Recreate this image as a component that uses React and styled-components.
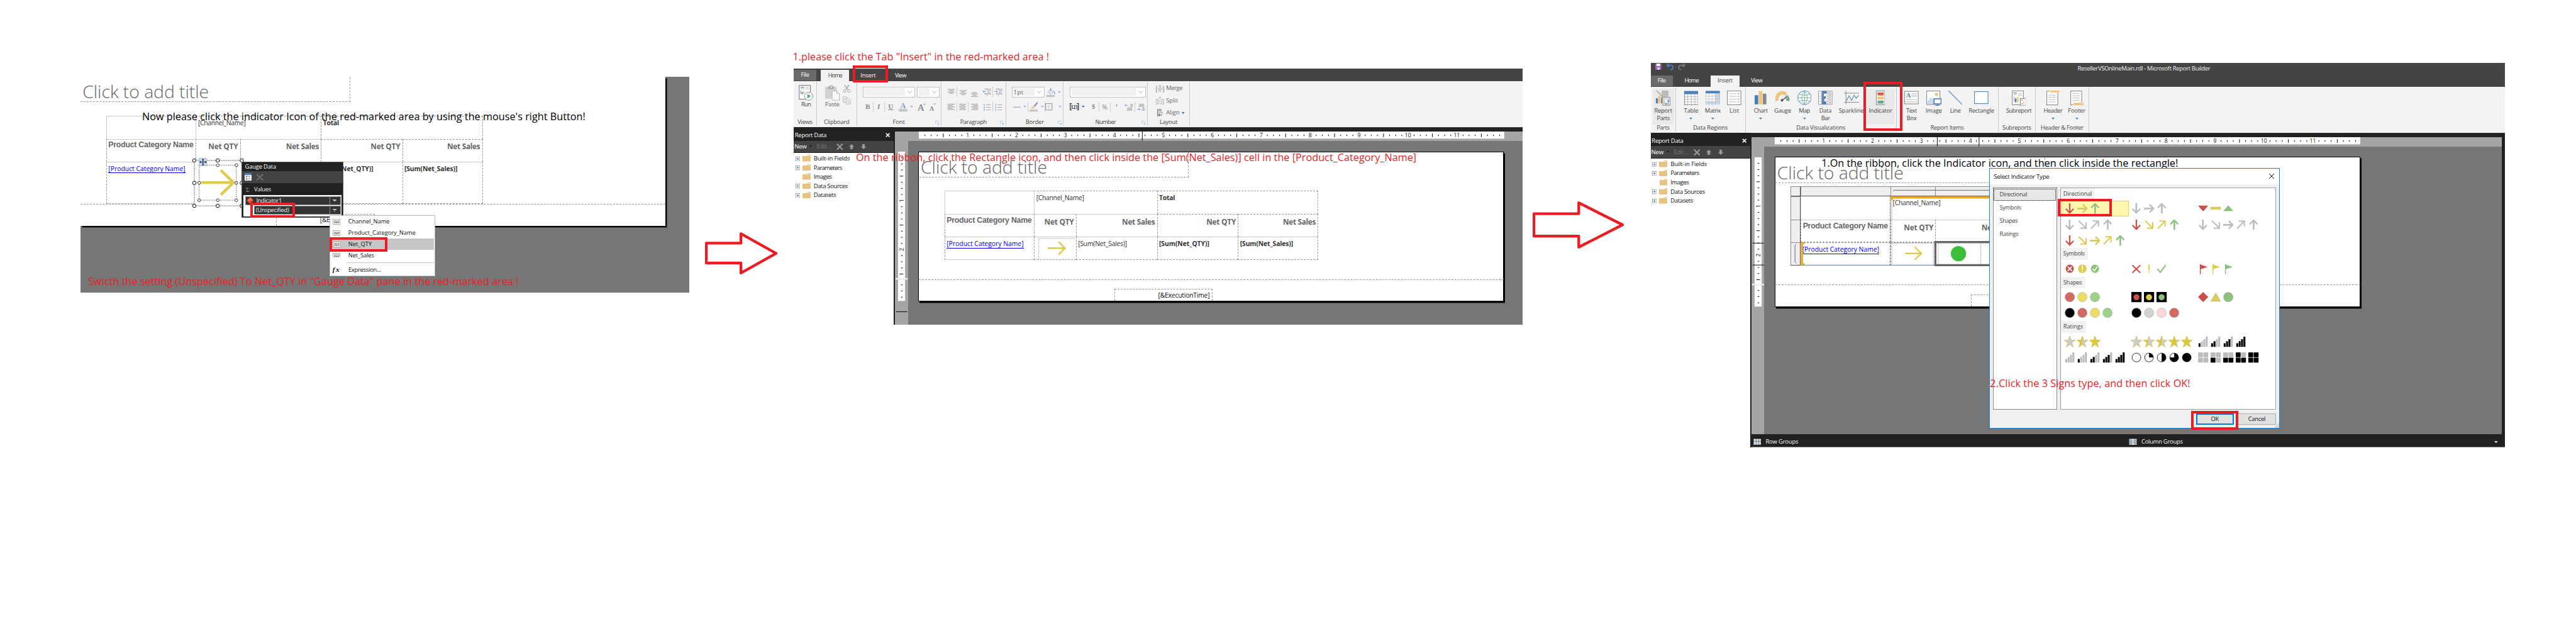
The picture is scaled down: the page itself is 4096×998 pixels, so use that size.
import React, { useLayoutEffect, useRef } from "react";
import styled, { createGlobalStyle, css } from "styled-components";

const STAGE_W = 5056;
const RED = "#ed1c24";
const UI = '"Open Sans", "Noto Sans", sans-serif';
const C = { r: "#cb5148", y: "#dccd50", g: "#8dc07a", n: "#bdbdbd", k: "#000" };

const Global = createGlobalStyle`
  html, body { margin: 0; padding: 0; background: #fff; overflow: hidden; }
  * { box-sizing: border-box; }
`;

/* ---------- text ---------- */

const Txt = styled.span`
  display: inline-block;
  flex: none;
  white-space: pre;
  line-height: 1.362;
  font-family: ${(p) => (p.$face ? `"${p.$face}", sans-serif` : UI)};
  font-size: ${(p) => p.$size}px;
  font-weight: ${(p) => p.$weight};
  color: ${(p) => p.$color};
`;

/* Text tracked so that it spans exactly `w` stage units. */
function T({ children, w, size = 11.5, weight = 400, color = "#444", face }) {
  const ref = useRef(null);
  useLayoutEffect(() => {
    const el = ref.current;
    if (!w || !el) return;
    el.style.letterSpacing = "0px";
    const unit = document.getElementById("stage").getBoundingClientRect().width / STAGE_W;
    const natural = el.getBoundingClientRect().width / unit;
    el.style.letterSpacing = `${(w - natural) / el.textContent.length}px`;
  }, [children, w, size]);
  return (
    <Txt ref={ref} $size={size} $weight={weight} $color={color} $face={face}>
      {children}
    </Txt>
  );
}

/* ---------- stage and annotations ---------- */

const Stage = styled.main`
  position: relative;
  display: flex;
  align-items: flex-start;
  width: ${STAGE_W}px;
  height: 1232px;
  zoom: 0.810127;
  background: #fff;
  overflow: hidden;
`;

const NoteBox = styled.div`
  position: absolute;
  left: ${(p) => p.$x}px;
  top: ${(p) => p.$b - 1.069 * p.$size}px;
  display: flex;
`;
const Note = ({ x, b, size = 20, ...rest }) => (
  <NoteBox $x={x} $b={b} $size={size}>
    <T size={size} {...rest} />
  </NoteBox>
);

const Marker = styled.div`
  position: absolute;
  left: ${(p) => p.$x}px;
  top: ${(p) => p.$y}px;
  width: ${(p) => p.$w}px;
  height: ${(p) => p.$h}px;
  border: 5px solid ${RED};
`;

const StepArrow = styled.svg`
  flex: none;
  margin: ${(p) => p.$mt}px 0 0 ${(p) => p.$ml}px;
  fill: none;
  stroke: ${RED};
  stroke-width: 5.4;
  stroke-linejoin: round;
`;

/* ---------- report page ---------- */

const Page = styled.div`
  position: relative;
  flex: none;
  width: ${(p) => p.$w}px;
  height: ${(p) => p.$h}px;
  background: #fff;
`;

const DashBox = styled.div`
  position: absolute;
  left: ${(p) => p.$x}px;
  top: ${(p) => p.$y}px;
  width: ${(p) => p.$w}px;
  height: ${(p) => p.$h}px;
  border: 0 dashed #9a9a9a;
  border-width: ${(p) => p.$sides};
`;

const Grid = styled.div`
  position: absolute;
  left: ${(p) => p.$x}px;
  top: ${(p) => p.$y}px;
  display: grid;
  grid-template-columns: ${(p) => p.$cols};
  grid-template-rows: ${(p) => p.$rows};
`;

const edge = (k) => (k === "s" ? "1px solid #c9c9c9" : k === "d" ? "1px dashed #999" : "none");
const Cell = styled.div`
  display: flex;
  justify-content: ${(p) => (p.$right ? "flex-end" : "flex-start")};
  align-items: flex-start;
  padding: ${(p) => p.$pt ?? 3.5}px 4px 0 3px;
  grid-column: span ${(p) => p.$span || 1};
  border-top: ${(p) => edge(p.$e[0])};
  border-right: ${(p) => edge(p.$e[1])};
  border-bottom: ${(p) => edge(p.$e[2])};
  border-left: ${(p) => edge(p.$e[3])};
`;
const Link = styled.span`
  display: flex;
  height: 18px;
  border-bottom: 1.4px solid #00f;
`;

const Head = ({ children, w }) => (
  <T size={14.6} weight={700} color="#666" w={w}>{children}</T>
);
const Field = ({ children, w, bold }) => (
  <T size={12.8} weight={bold ? 700 : 400} color="#333" w={w}>{children}</T>
);
const CategoryHead = () => (
  <T size={15.2} weight={700} color="#666" face="Liberation Sans" w={167}>Product Category Name</T>
);
const CategoryLink = () => (
  <Link><T size={12.8} color="#00f" w={151}>[Product Category Name]</T></Link>
);

const CellArrow = styled.svg`
  flex: none;
  fill: none;
  stroke: #dccd50;
`;

function ReportTable({ x, y, cols, lastRow, big }) {
  return (
    <Grid $x={x} $y={y} $cols={cols} $rows={`45px 45px ${lastRow}px`}>
      <Cell $e={["s", "", "", "s"]} />
      <Cell $e={["d", "", "", "s"]} $span={2}><Field w={93.5}>[Channel_Name]</Field></Cell>
      <Cell $e={["d", "d", "", "d"]} $span={2}><Field bold w={31}>Total</Field></Cell>
      <Cell $e={["s", "", "", "d"]} $pt={1}><CategoryHead /></Cell>
      <Cell $e={["s", "", "", "d"]} $right><Head w={58}>Net QTY</Head></Cell>
      <Cell $e={["s", "", "", "d"]} $right><Head w={64.5}>Net Sales</Head></Cell>
      <Cell $e={["d", "", "", "d"]} $right><Head w={58}>Net QTY</Head></Cell>
      <Cell $e={["d", "d", "", "d"]} $right><Head w={64.5}>Net Sales</Head></Cell>
      <Cell $e={["s", "", "s", "d"]}><CategoryLink /></Cell>
      <Cell $e={["s", "", "d", "d"]} $pt={0}>
        {!big && (
          <CellArrow width="76" height="43">
            <path d="M4.500 43V2.500H76" stroke="#999" strokeDasharray="2.500 1.500" />
            <path d="M22.500 21.500H55M43.500 9L56 21.500L43.500 34" strokeWidth="3.200" />
          </CellArrow>
        )}
      </Cell>
      <Cell $e={["s", "", "d", "d"]}><Field w={96}>[Sum(Net_Sales)]</Field></Cell>
      <Cell $e={["s", "", "d", "d"]}><Field bold w={98.5}>[Sum(Net_QTY)]</Field></Cell>
      <Cell $e={["s", "d", "d", "d"]}><Field bold w={104}>[Sum(Net_Sales)]</Field></Cell>
    </Grid>
  );
}

/* ---------- shot 1: gauge data ---------- */

const Shot = styled.section`
  flex: none;
  width: 1195px;
  height: 423px;
  margin: 151px 0 0 158px;
  background: #767676;
`;
const EdgePage = styled(Page)`
  box-shadow: 3px 3px 0 #000;
`;

const Overlay = styled.svg`
  position: absolute;
  left: ${(p) => p.$x}px;
  top: ${(p) => p.$y}px;
  overflow: visible;
`;

function Selection() {
  const xs = [0, 46, 93];
  const ys = [0, 44, 89];
  const ix = [9.5, 46, 82.5];
  const iy = [9.5, 44, 78];
  const out = [], inn = [];
  xs.forEach((x, i) => ys.forEach((y, j) => {
    if (i === 1 && j === 1) return;
    out.push(<rect key={`o${i}${j}`} x={x - 3} y={y - 3} width="6" height="6" rx="1.500" fill="#fff" stroke="#000" strokeWidth="1.200" />);
    if (i || j) inn.push(<ellipse key={`i${i}${j}`} cx={ix[i]} cy={iy[j]} rx="2.800" ry="2.800" fill="#fff" stroke="#333" strokeWidth="1.200" />);
  }));
  return (
    <Overlay $x={223.6} $y={163.3} width="100" height="96" fill="none">
      <rect x="0" y="0" width="93" height="89" fill="#fff" stroke="#000" strokeDasharray="1.200 1.200" />
      <rect x="9.500" y="9.500" width="73" height="68.500" stroke="#888" strokeWidth="1.600" strokeDasharray="2 1.800" />
      <path d="M13 43.300H76M51.800 19L77 43.300L51.800 67.500" stroke="#dccd50" strokeWidth="5.400" />
      {out}
      {inn}
      <rect x="9.500" y="-4" width="15" height="14.500" rx="1" fill="#d3e0f0" stroke="#8ba0bd" />
      <path d="M17-2.500V9M11 3.200H23M15-.5L17-2.500L19-.5M15 7L17 9L19 7M13 1.200L11 3.200L13 5.200M21 1.200L23 3.200L21 5.200" stroke="#1d2b45" strokeWidth="1.300" />
    </Overlay>
  );
}

const GaugePanel = styled.aside`
  position: absolute;
  left: 474.6px;
  top: 317.3px;
  width: 199.2px;
  height: 110.4px;
  background: #212121;
  border: 1px solid #555;
  display: flex;
  flex-direction: column;
`;
const GaugeTitle = styled.div`
  height: 17px;
  padding-left: 5px;
  display: flex;
  align-items: center;
`;
const GaugeTools = styled.div`
  height: 23.5px;
  background: #444;
  display: flex;
  align-items: center;
  gap: 9px;
  padding-left: 4px;
`;
const GaugeValues = styled.div`
  height: 23.5px;
  display: flex;
  align-items: center;
  padding: 2px 0 0 6px;
  gap: 8px;
`;
const GaugeList = styled.div`
  width: 193.5px;
  height: 42.7px;
  margin-left: 1.5px;
  padding: 2.8px 2px 0;
  background: #fff;
  display: flex;
  flex-direction: column;
  align-items: flex-end;
  gap: 1.5px;
`;
const GaugeItem = styled.div`
  width: ${(p) => p.$w}px;
  height: 17.3px;
  background: #333;
  border: 1px solid #8a8a8a;
  display: flex;
  align-items: center;
  padding-left: 2px;
  gap: 5px;
  &::after {
    content: "";
    margin-left: auto;
    width: 20px;
    height: 100%;
    border-left: 1px solid #8a8a8a;
    background: linear-gradient(#bbb, #bbb) 5px 5px / 8px 1.3px no-repeat,
      linear-gradient(#bbb, #bbb) 6px 6.3px / 6px 1.3px no-repeat,
      linear-gradient(#bbb, #bbb) 7.5px 7.6px / 3px 1.3px no-repeat;
  }
`;

const Menu = styled.nav`
  position: absolute;
  left: 647px;
  top: 422px;
  width: 207px;
  height: 120px;
  padding: 1px 1px 0 1px;
  background: #fff;
  border: 1px solid #bdbdbd;
`;
const MenuItem = styled.div`
  height: 22px;
  padding-left: 3.5px;
  display: flex;
  align-items: center;
  gap: 16px;
  background: ${(p) => (p.$on ? "#c6c6c6" : "#fff")};
`;
const MenuRule = styled.hr`
  margin: 3px 0 2px 31px;
  border: 0;
  border-top: 1px solid #c4c4c4;
`;
const FieldIcon = () => (
  <svg width="15" height="11" fill="none">
    <rect x=".5" y=".5" width="14" height="10" fill="#fffdf2" stroke="#ad9f78" />
    <path d="M3 4H6M7 4H9M10 4H12.500M3 7H5M6 7H8.500M9.500 7H12" stroke="#22229a" strokeWidth="1.400" />
  </svg>
);

function GaugeShot() {
  return (
    <Shot>
      <EdgePage $w={1148.5} $h={292}>
        <NoteBox $x={4} $b={42.5} $size={35}><T size={35} weight={300} color="#666" w={248}>Click to add title</T></NoteBox>
        <DashBox $x={0} $y={1} $w={530} $h={48.5} $sides="0 1px 1px 0" />
        <ReportTable x={50.5} y={76.3} cols="176px 86.5px 159px 159.5px 158px" lastRow={83} big />
        <DashBox $x={0} $y={249} $w={1148} $h={1} $sides="1px 0 0 0" />
        <DashBox $x={384} $y={268.5} $w={193.5} $h={23.5} $sides="1px 1px 0 1px" />
        <NoteBox $x={470} $b={285} $size={12.8}><T size={12.8} color="#222" w={101}>[&amp;ExecutionTime]</T></NoteBox>
        <Selection />
      </EdgePage>
    </Shot>
  );
}

function GaugeFloats() {
  const menu = [["Channel_Name", 81], ["Product_Category_Name", 132], ["Net_QTY", 46], ["Net_Sales", 50.5]];
  return (
    <>
      <GaugePanel>
        <GaugeTitle><T color="#fff" w={61}>Gauge Data</T></GaugeTitle>
        <GaugeTools>
          <svg width="14" height="15" fill="none"><path d="M0 0H14V15H0Z" fill="#f4f4f4" /><path d="M0 2H14" stroke="#4a7fc1" strokeWidth="4" /><path d="M7 7H11M7 11.500H11" stroke="#666" /><path d="M3 7H5M3 11.500H5" stroke="#333" strokeWidth="2" /></svg>
          <svg width="15" height="14" fill="none"><path d="M1 1L14 13M14 1L1 13" stroke="#707070" strokeWidth="2.400" /></svg>
        </GaugeTools>
        <GaugeValues>
          <T size={12} weight={700} color="#777" face="Liberation Serif" w={9}>Σ</T>
          <T color="#eee" w={33}>Values</T>
        </GaugeValues>
        <GaugeList>
          <GaugeItem $w={188}>
            <svg width="14" height="14"><path d="M7 0L14 7L7 14L0 7Z" fill="#d8492a" /><path d="M7 1L12 6L5 9L2 7Z" fill="#ee7a55" /></svg>
            <T color="#eee" w={50}>Indicator1</T>
          </GaugeItem>
          <GaugeItem $w={170}><T color="#eee" w={65}>(Unspecified)</T></GaugeItem>
        </GaugeList>
      </GaugePanel>
      <Marker $x={491.8} $y={397} $w={87.2} $h={30.7} />
      <Menu>
        {menu.map(([label, w], i) => (
          <MenuItem key={label} $on={i === 2}><FieldIcon /><T color="#111" w={w}>{label}</T></MenuItem>
        ))}
        <MenuRule />
        <MenuItem>
          <T size={14} weight={700} color="#111" face="Liberation Serif" w={15}><i>fx</i></T>
          <T color="#111" w={64}>Expression...</T>
        </MenuItem>
      </Menu>
      <Marker $x={646.3} $y={465} $w={114.5} $h={28.7} />
    </>
  );
}

/* ---------- report builder window ---------- */

const Win = styled.section`
  flex: none;
  display: flex;
  flex-direction: column;
  width: ${(p) => p.$w}px;
  height: ${(p) => p.$h}px;
  margin: ${(p) => p.$mt}px 0 0 ${(p) => p.$ml}px;
  background: #fff;
`;
const TitleBar = styled.header`
  height: 21px;
  background: #444;
  display: flex;
  align-items: flex-start;
  padding: 1px 0 0 9px;
`;
const WinTitle = styled.div`
  margin-left: 769px;
  margin-top: -2px;
`;
const TabBar = styled.div`
  height: 25px;
  background: #444;
  padding-top: 3px;
  display: flex;
`;
const Tab = styled.div`
  width: ${(p) => p.$w}px;
  height: ${(p) => (p.$file ? 21 : 22)}px;
  display: flex;
  align-items: center;
  justify-content: center;
  background: ${(p) => (p.$file ? "#6a6a6a" : p.$on ? "#f3f3f3" : "transparent")};
  margin-right: ${(p) => p.$mr || 0}px;
`;
const Ribbon = styled.div`
  height: 90px;
  flex: none;
  background: #f3f3f3;
  display: flex;
`;
const Band = styled.div`
  height: 9px;
  flex: none;
  background: #212121;
  border-top: 1px solid #3c4442;
`;
const Group = styled.div`
  position: relative;
  flex: none;
  width: ${(p) => p.$w}px;
  height: 86px;
  margin-top: 2px;
  border-right: 1px solid #c6c6c6;
  display: flex;
  flex-direction: column;
`;
const GroupMain = styled.div`
  height: 72px;
  padding: ${(p) => p.$pad};
  display: flex;
  flex-direction: ${(p) => (p.$col ? "column" : "row")};
`;
const GroupLabel = styled.div`
  height: 14px;
  display: flex;
  align-items: center;
  justify-content: center;
  padding-top: 1px;
`;
const Launcher = styled.svg`
  position: absolute;
  right: 3px;
  bottom: 2px;
  fill: none;
  stroke: #9db9d8;
`;
const RibbonGroup = ({ w, pad, col, label, lw, launcher, children }) => (
  <Group $w={w}>
    <GroupMain $pad={pad} $col={col}>{children}</GroupMain>
    <GroupLabel><T w={lw}>{label}</T></GroupLabel>
    {launcher && <Launcher width="8" height="8"><path d="M.5 6V.5H7M3.500 3.500L7 7M7 3.500V7H3.500" /></Launcher>}
  </Group>
);

const Body = styled.div`
  flex: 1;
  display: flex;
  min-height: 0;
`;
const Side = styled.aside`
  width: ${(p) => p.$w}px;
  flex: none;
  margin-top: -9px;
  background: #fff;
`;
const SideHead = styled.div`
  height: 27px;
  background: #212121;
  display: flex;
  align-items: center;
  justify-content: space-between;
  padding: 4px 7px 0 2px;
`;
const SideTools = styled.div`
  height: 24.5px;
  background: #444;
  border-bottom: 1px solid #222;
  display: flex;
  align-items: center;
  padding-left: 1px;
`;
const Gap = styled.i`
  flex: none;
  width: ${(p) => p.$w}px;
`;
const TreeRow = styled.div`
  height: 18px;
  display: flex;
  align-items: center;
  padding-left: ${(p) => (p.$leaf ? 17 : 3)}px;
`;
const Expander = styled.svg`
  flex: none;
  margin: 2px 5px 0 0;
`;
const Tree = styled.div`
  padding-top: 1px;
`;
const Strip = styled.div`
  flex: none;
  width: ${(p) => p.$w}px;
  background: #212121;
`;

function ReportData({ width }) {
  const rows = [["Built-in Fields", 71, 1], ["Parameters", 55.5, 1], ["Images", 35.5, 0], ["Data Sources", 67, 1], ["Datasets", 44, 1]];
  return (
    <Side $w={width}>
      <SideHead>
        <T size={11.8} color="#fff" w={62}>Report Data</T>
        <svg width="9" height="9"><path d="M1 1L8 8M8 1L1 8" stroke="#fff" strokeWidth="2" /></svg>
      </SideHead>
      <SideTools>
        <T size={12} color="#fff" w={24}>New</T><Gap $w={6} />
        <svg width="5" height="4"><path d="M0 0H5L2.500 3Z" fill="#111" /></svg><Gap $w={9} />
        <T size={12} color="#777" w={28}>Edit...</T><Gap $w={11} />
        <svg width="13" height="13"><path d="M1 1L12 12M12 1L1 12" stroke="#999" strokeWidth="2.600" /></svg><Gap $w={12} />
        <svg width="10" height="10"><path d="M5 0L10 5H7.500V10H2.500V5H0Z" fill="#999" /></svg><Gap $w={13} />
        <svg width="10" height="10"><path d="M5 10L10 5H7.500V0H2.500V5H0Z" fill="#999" /></svg>
      </SideTools>
      <Tree>
        {rows.map(([label, w, open]) => (
          <TreeRow key={label} $leaf={!open}>
            {!!open && (
              <Expander width="9" height="9"><rect x=".5" y=".5" width="8" height="8" fill="#fff" stroke="#919191" /><path d="M2.500 4.500H6.500M4.500 2.500V6.500" stroke="#2b4a9a" /></Expander>
            )}
            <svg width="16" height="13"><path d="M0 2.500H9L10 0H16V13H0Z" fill="#e9c282" /><path d="M10.500 1.700H15" stroke="#fff" /></svg>
            <Gap $w={6} />
            <T size={11.8} color="#111" w={w}>{label}</T>
          </TreeRow>
        ))}
      </Tree>
    </Side>
  );
}

/* ---------- rulers and designer ---------- */

const RulerBand = styled.div`
  flex: none;
  height: 19px;
  background: #a5a5a5;
  padding-left: 46px;
`;
const Designer = styled.div`
  flex: 1;
  min-width: 0;
  display: flex;
  flex-direction: column;
`;
const DesignArea = styled.div`
  flex: 1;
  min-height: 0;
  display: flex;
  background: #767676;
`;
const VRuler = styled.div`
  width: 25px;
  flex: none;
  background: #a5a5a5;
  padding-top: 21px;
`;
const Desk = styled.div`
  padding: 20px 0 0 20px;
`;
const FramedPage = styled(Page)`
  border: 1px solid #000;
  box-shadow: 2.5px 3px 0 #000;
`;
const Svg = styled.svg`
  display: block;
  overflow: visible;
`;

function ticks(n) {
  return Array.from({ length: n }, (_, i) => i + 1);
}

function HRuler({ pointers }) {
  return (
    <Svg width="1149" height="14" fontFamily="Open Sans" fontSize="10.500">
      <rect width="1149" height="14" fill="#fff" />
      {ticks(95).map((i) =>
        i % 8 === 0 ? (
          <text key={i} x={i * 12} y="11" textAnchor="middle" fill="#111">{i / 8}</text>
        ) : (
          <path key={i} d={i % 4 === 0 ? `M${i * 12} 4v7` : `M${i * 12} 6v3`} stroke="#000" strokeWidth="1.200" />
        )
      )}
      {pointers.map((x) => <path key={x} d={`M${x} 0V18`} stroke="#000" strokeWidth="1.200" />)}
    </Svg>
  );
}

function SideRuler({ pointers }) {
  return (
    <Svg width="25" height="293" fontFamily="Open Sans" fontSize="10.500">
      <path d="M6 0H20V248H6ZM6 251H20V293H6Z" fill="#fff" />
      <path d="M1 248H25V251H1Z" fill="#efefef" />
      {ticks(20).map((i) =>
        i % 8 === 0 ? (
          <text key={i} transform={`translate(17 ${i * 12}) rotate(-90)`} textAnchor="middle" fill="#111">{i / 8}</text>
        ) : (
          <path key={i} d={i % 4 === 0 ? `M9.500 ${i * 12}h7` : `M12 ${i * 12}h3`} stroke="#000" strokeWidth="1.200" />
        )
      )}
      {ticks(3).map((i) => <path key={i} d={`M12 ${249.3 + i * 12}h3`} stroke="#000" strokeWidth="1.200" />)}
      {pointers.map((y) => <path key={y} d={`M2 ${y}H24`} stroke="#000" strokeWidth="1.200" />)}
    </Svg>
  );
}

function DesignSurface({ hp, vp, children }) {
  return (
    <Designer>
      <RulerBand><HRuler pointers={hp} /></RulerBand>
      <DesignArea>
        <VRuler><SideRuler pointers={vp} /></VRuler>
        <Desk>
          <FramedPage $w={1150} $h={294}>
            <NoteBox $x={4} $b={42.5} $size={35}><T size={35} weight={300} color="#666" w={248}>Click to add title</T></NoteBox>
            <DashBox $x={1} $y={1} $w={529} $h={49} $sides="0 1px 1px 0" />
            {children}
            <DashBox $x={0} $y={249.3} $w={1148} $h={1} $sides="1px 0 0 0" />
            <DashBox $x={384} $y={268} $w={193} $h={24} $sides="1px 1px 0 1px" />
            <NoteBox $x={470} $b={285.5} $size={12.8}><T size={12.8} color="#111" w={101}>[&amp;ExecutionTime]</T></NoteBox>
          </FramedPage>
        </Desk>
      </DesignArea>
    </Designer>
  );
}

/* ---------- home ribbon ---------- */

const Row = styled.div`
  display: flex;
  align-items: center;
  height: ${(p) => p.$h || 21}px;
  margin-top: ${(p) => p.$mt || 0}px;
`;
const Mini = styled.div`
  flex: none;
  width: ${(p) => p.$w}px;
  height: 20px;
  display: flex;
  align-items: center;
  justify-content: center;
  gap: 5px;
  ${(p) => p.$line && css`border-right: 1px solid #ccc;`}
`;
const ComboBox = styled.div`
  flex: none;
  width: ${(p) => p.$w}px;
  height: 21px;
  margin-right: 4px;
  padding: 2px 4px 2px 2px;
  border: 1px solid #c3c3c3;
  background: #fff;
  display: flex;
  align-items: center;
  justify-content: space-between;
`;
const ComboFill = styled.div`
  height: 15px;
  width: ${(p) => p.$w}px;
  background: #f0f0f0;
  display: flex;
  align-items: center;
`;
const Combo = ({ w, fill, children }) => (
  <ComboBox $w={w}>
    <ComboFill $w={fill}>{children}</ComboFill>
    <svg width="9" height="6" fill="none"><path d="M.5 .5L4.500 5L8.500 .5" stroke="#aaa" strokeWidth="1.200" /></svg>
  </ComboBox>
);
const Caret = ({ color = "#9db2d6" }) => <svg width="6" height="4"><path d="M0 0H6L3 3.600Z" fill={color} /></svg>;

const Lines = ({ rows, y = 0 }) => (
  <svg width="16" height="20" fill="none">
    {rows.map(([a, b], i) => <path key={i} d={`M${a} ${y + i * 2.6}H${b}`} stroke="#8c8c8c" strokeWidth="1.100" />)}
  </svg>
);
const Indent = ({ flip }) => (
  <svg width="17" height="18" fill="none">
    <path d="M3 3.500H16M9 6.500H16M9 9.500H14M3 12.500H16M8 15V17M8 2V4" stroke="#909090" strokeWidth="1.300" strokeDasharray="4 .8" />
    <path d={flip ? "M0 8H6M4 6L6 8L4 10" : "M6 8H0M2 6L0 8L2 10"} stroke="#88a6d4" strokeWidth="1.400" />
  </svg>
);
const Serif = ({ children, size = 14, color = "#888", w }) => (
  <T size={size} weight={700} color={color} face="Liberation Serif" w={w}>{children}</T>
);
const Stack = styled.div`
  display: flex;
  flex-direction: column;
  align-items: center;
  flex: none;
  width: ${(p) => p.$w}px;
`;
const LayoutRow = styled.div`
  height: 24px;
  display: flex;
  align-items: center;
  gap: 4px;
  padding-left: 16px;
`;

function HomeRibbon() {
  return (
    <Ribbon>
      <RibbonGroup w={45.4} pad="6px 0 0 10px" label="Views" lw={29}>
        <Stack $w={28}>
          <svg width="28" height="31" fill="none">
            <rect x="1" y="1" width="22" height="27" fill="#fff" stroke="#777" strokeWidth="1.300" />
            <path d="M4 5H11" stroke="#4a7fb8" strokeWidth="1.400" /><path d="M4 8H11M13 5H20M13 8H20" stroke="#aaa" />
            <path d="M4.500 18V11" stroke="#666" /><path d="M7 18V14" stroke="#4a7fb8" strokeWidth="2" /><path d="M10 18V12" stroke="#edc27a" strokeWidth="2" />
            <circle cx="19.500" cy="22" r="8" fill="#fff" stroke="#8a8a8a" strokeWidth="1.200" /><path d="M17 17.500V26.500L24 22Z" fill="#5fa588" />
          </svg>
          <T w={19}>Run</T>
        </Stack>
      </RibbonGroup>
      <RibbonGroup w={78.6} pad="6px 0 0 15px" label="Clipboard" lw={50}>
        <Stack $w={30}>
          <svg width="30" height="31" fill="none">
            <path d="M1 4H24V27H1Z" fill="#d2d2d2" /><path d="M7 3H10V1H16V3H19V8H7Z" fill="#a8a8a8" /><circle cx="13" cy="4" r="1.500" fill="#f3f3f3" />
            <path d="M15 12H24L29 17V30H15Z" fill="#f8f8f8" stroke="#b0b0b0" /><path d="M24 12V17H29" stroke="#b0b0b0" />
          </svg>
          <T color="#666" w={28}>Paste</T>
        </Stack>
        <Stack $w={28}>
          <svg width="16" height="38" fill="none">
            <path d="M3.500 0L11 10M12.500 0L5 10" stroke="#a3a3a3" strokeWidth="1.600" />
            <circle cx="3.800" cy="12" r="2.700" stroke="#a3a3a3" /><circle cx="12.200" cy="12" r="2.700" stroke="#a3a3a3" />
            <path d="M1 23.500H7L9 26V34H1Z" stroke="#aaa" /><path d="M6.500 26.500H12L15 29.500V37.500H6.500Z" fill="#f3f3f3" stroke="#aaa" /><path d="M8.500 31H13M8.500 34H13M3 27H5M3 30H5" stroke="#aaa" />
          </svg>
        </Stack>
      </RibbonGroup>
      <RibbonGroup w={165.6} pad="9px 0 0 11px" col label="Font" lw={24} launcher>
        <Row><Combo w={103} fill={80} /><Combo w={44} fill={21} /></Row>
        <Row $h={20} $mt={9}>
          <Mini $w={21.5} $line><Serif>B</Serif></Mini>
          <Mini $w={22} $line><Serif><i>I</i></Serif></Mini>
          <Mini $w={24}><Serif><u>U</u></Serif></Mini>
          <Mini $w={36}>
            <svg width="17" height="20"><text x="8.500" y="12.500" textAnchor="middle" fontFamily="Liberation Serif" fontWeight="700" fontSize="15" fill="#8a9bbd">A</text><path d="M0 14H17V19H0Z" fill="#c4c4c4" /></svg>
            <Caret />
          </Mini>
          <Gap $w={5} />
          <svg width="44" height="20"><text x="0" y="17" fontFamily="Liberation Serif" fontWeight="700" fontSize="18" fill="#8c8c8c">A</text><path d="M11 5.500H16L13.500 2.500Z" fill="#88a6d4" /><text x="23" y="17" fontFamily="Liberation Serif" fontWeight="700" fontSize="13" fill="#8c8c8c">A</text><path d="M31 3H36L33.500 6Z" fill="#88a6d4" /></svg>
        </Row>
      </RibbonGroup>
      <RibbonGroup w={127.4} pad="9px 0 0 9px" col label="Paragraph" lw={52} launcher>
        <Row>
          <Mini $w={22.5} $line><Lines y={5} rows={[[1, 15], [4, 12], [1, 15], [4, 12]]} /></Mini>
          <Mini $w={22.5}><Lines y={7.5} rows={[[1, 15], [4, 12], [1, 15], [4, 12]]} /></Mini>
          <Mini $w={23}><Lines y={11} rows={[[4, 12], [1, 15], [4, 12], [1, 15]]} /></Mini>
          <Gap $w={3} />
          <Mini $w={22} $line><Indent /></Mini>
          <Mini $w={22}><Indent flip /></Mini>
        </Row>
        <Row $h={20} $mt={9}>
          <Mini $w={22.5} $line><Lines y={4.5} rows={[[1, 15], [1, 11], [1, 15], [1, 11], [1, 15]]} /></Mini>
          <Mini $w={22.5} $line><Lines y={4.5} rows={[[1, 15], [3, 13], [1, 15], [3, 13], [1, 15]]} /></Mini>
          <Mini $w={23}><Lines y={4.5} rows={[[1, 15], [5, 15], [1, 15], [5, 15], [1, 15]]} /></Mini>
          <Gap $w={3} />
          <Mini $w={22} $line>
            <svg width="15" height="16"><path d="M5 3H14M5 8H14M5 13H14" stroke="#999" /><path d="M0 3H2.500M0 8H2.500M0 13H2.500" stroke="#88a6d4" strokeWidth="2.500" /></svg>
          </Mini>
          <Mini $w={22}>
            <svg width="15" height="16"><path d="M5 3H14M5 8H14M5 13H14" stroke="#999" /><path d="M1.500 1V5M1.500 6V10M1.500 11V15" stroke="#88a6d4" strokeWidth="1.300" /></svg>
          </Mini>
        </Row>
      </RibbonGroup>
      <RibbonGroup w={113} pad="9px 0 0 11px" col label="Border" lw={36} launcher>
        <Row>
          <Combo w={64} fill={42}><T color="#666" size={12} w={20}>1pt</T></Combo>
          <svg width="18" height="21" fill="none"><path d="M3 10L8 4L14 9L8 15Z" fill="#e2e8f1" stroke="#9aa9c4" /><path d="M8 8V2M14 9Q17 11 16 15" stroke="#8a9bbd" strokeWidth="1.400" /><path d="M0 16H16V20H0Z" fill="#c4c4c4" /></svg>
          <Gap $w={4} /><Caret />
        </Row>
        <Row $h={20} $mt={9}>
          <Mini $w={32.5} $line><svg width="15" height="3"><path d="M0 1.500H15" stroke="#999" strokeWidth="1.300" /></svg><Caret /></Mini>
          <Mini $w={33} $line>
            <svg width="17" height="20" fill="none"><path d="M16 1L9 9" stroke="#8a9bbd" strokeWidth="3" /><path d="M9 8Q4 8 3 14Q9 14 11 10Z" fill="#e8cf9a" /><path d="M0 15H16V19H0Z" fill="#c4c4c4" /></svg>
            <Caret />
          </Mini>
          <Mini $w={33}>
            <svg width="14" height="14" fill="none"><rect x=".7" y=".7" width="12.600" height="12.600" stroke="#999" strokeWidth="1.300" /><path d="M7 2V12M2 7H12" stroke="#aaa" strokeDasharray="1.500 1" /></svg>
            <Gap $w={2} /><Caret />
          </Mini>
        </Row>
      </RibbonGroup>
      <RibbonGroup w={165} pad="9px 0 0 12px" col label="Number" lw={40} launcher>
        <Row><Combo w={149} fill={127} /></Row>
        <Row $h={20} $mt={9}>
          <svg width="18" height="14" fill="none"><path d="M4 .7H1V13.300H4M14 .7H17V13.300H14" stroke="#222" strokeWidth="1.400" /><text x="9" y="11" textAnchor="middle" fontFamily="Liberation Serif" fontWeight="700" fontSize="9" fill="#222">123</text></svg>
          <Gap $w={5} /><Caret color="#3f6fc0" /><Gap $w={7} />
          <Mini $w={22} $line><Serif size={13}>$</Serif></Mini>
          <Mini $w={22} $line><T size={13} color="#888">%</T></Mini>
          <Mini $w={23}><Serif size={15}>’</Serif></Mini>
          <Gap $w={2} />
          <Mini $w={23} $line>
            <svg width="17" height="16" fill="#8c8c8c" fontFamily="Open Sans" fontWeight="600" fontSize="8.500"><text x="9" y="7">.0</text><text x="3" y="15">.00</text><path d="M7 4H1M3 2L1 4L3 6" fill="none" stroke="#88a6d4" strokeWidth="1.300" /></svg>
          </Mini>
          <Mini $w={22}>
            <svg width="17" height="16" fill="#8c8c8c" fontFamily="Open Sans" fontWeight="600" fontSize="8.500"><text x="3" y="7">.00</text><text x="9" y="15">.0</text><path d="M1 12H7M5 10L7 12L5 14" fill="none" stroke="#88a6d4" strokeWidth="1.300" /></svg>
          </Mini>
        </Row>
      </RibbonGroup>
      <RibbonGroup w={82.5} pad="1px 0 0 0" col label="Layout" lw={35}>
        <LayoutRow>
          <svg width="16" height="15" fill="none"><path d="M3 3.500H.7V14H3M13 3.500H15.300V14H13" stroke="#999" strokeWidth="1.300" /><path d="M5.500 0H10.500V14H5.500Z" fill="#d0d0d0" /><path d="M3 6L5 8L3 10M13 6L11 8L13 10" stroke="#999" /></svg>
          <T color="#666" w={32}>Merge</T>
        </LayoutRow>
        <LayoutRow>
          <svg width="16" height="15" fill="none"><path d="M.7 4.500H4V14.500H.7ZM12 4.500H15.300V14.500H12Z" stroke="#aaa" /><path d="M5 3H11V15H5Z" fill="#e3e3e3" /><path d="M6 0H10L8 3Z" fill="#aaa" /></svg>
          <T color="#666" w={23}>Split</T>
        </LayoutRow>
        <LayoutRow>
          <svg width="16" height="15" fill="none"><path d="M3.500 0V15" stroke="#555" strokeWidth="1.300" /><path d="M6 1H10V3.500H6Z" stroke="#555" /><path d="M5 5H14V9H5Z" fill="#c8c8c8" /><path d="M5 12H12M7.500 10L5.500 12L7.500 14" stroke="#555" strokeWidth="1.300" /></svg>
          <T color="#666" w={26}>Align</T>
          <Caret color="#3f6fc0" />
        </LayoutRow>
      </RibbonGroup>
    </Ribbon>
  );
}

/* ---------- insert ribbon ---------- */

const ToolBtn = styled.div`
  flex: none;
  width: ${(p) => p.$w}px;
  height: 70px;
  padding-top: 4px;
  display: flex;
  flex-direction: column;
  align-items: center;
  background: ${(p) => (p.$on ? "#e9e9e9" : "transparent")};
`;
const ToolIcon = styled.svg`
  display: block;
  flex: none;
  margin-bottom: 3px;
  fill: none;
`;
const ToolLine = styled.div`
  height: 15px;
  display: flex;
  align-items: center;
`;
const Tool = ({ w, label, lw, second, sw, menu, on, iw = 28, children }) => (
  <ToolBtn $w={w} $on={on}>
    <ToolIcon width={iw} height="29">{children}</ToolIcon>
    <ToolLine><T w={lw}>{label}</T></ToolLine>
    {second && <ToolLine><T w={sw}>{second}</T></ToolLine>}
    {menu && <ToolLine><Caret color="#4a7fc1" /></ToolLine>}
  </ToolBtn>
);
const B = "#4a80b8", O = "#edc57c", G = "#888";

function InsertRibbon() {
  return (
    <Ribbon>
      <RibbonGroup w={49.5} pad="2px 0 0 3.6px" label="Parts" lw={25}>
        <Tool w={42} on label="Report" lw={35} second="Parts" sw={25}>
          <path d="M1 0L13 12" stroke={G} strokeWidth="1.300" />
          <path d="M12.500 1H23.500V11H12.500ZM12.500 4H23.500M12.500 7.500H23.500M16 1V11M20 1V11" stroke={G} />
          <path d="M0 15H4V25H0Z" fill={B} /><path d="M5 10H9V25H5Z" fill={O} /><path d="M10 13H12.500V25H10Z" fill={G} />
          <rect x="13.500" y="13" width="14.500" height="15.500" fill="#fff" stroke={G} strokeWidth="1.300" />
          <path d="M15 15H19V18H15ZM20 15H27V18H20ZM15 19H18V27H15Z" fill="#c4c4c4" />
          <path d="M20 26H24.500V20M18.500 26L21 24M18.500 26L21 28M24.500 19L22.500 21.500M24.500 19L26.500 21.500" stroke={B} strokeWidth="1.300" />
        </Tool>
      </RibbonGroup>
      <RibbonGroup w={137} pad="2px 0 0 8.5px" label="Data Regions" lw={68}>
        <Tool w={42.5} label="Table" lw={28} menu>
          <rect x=".7" y="1.500" width="26.600" height="26" fill="#fff" stroke={G} strokeWidth="1.300" /><path d="M0 1H28V7H0Z" fill={B} />
          <path d="M1 12H27M1 17H27M1 22H27M7 7V27M14 7V27M21 7V27" stroke="#aaa" />
        </Tool>
        <Tool w={42.5} label="Matrix" lw={31} menu>
          <path d="M0 1H28V27.500H0Z" fill="#fff" /><path d="M0 21.500H28V27.500H0ZM19 6H28V22H19Z" fill="#c9d9ee" /><path d="M0 0.500H28V5.500H0Z" fill={B} />
          <path d="M.5 5V27.500M6.500 5V27.500M12.500 5V27.500M19 5V27.500M0 11H28M0 16.500H28M0 22H28M27.500 5V27.500" stroke="#bbb" />
        </Tool>
        <Tool w={42.5} label="List" lw={19}>
          <rect x=".7" y=".7" width="26.600" height="27" fill="#fff" stroke={G} strokeWidth="1.300" />
          <path d="M4 6H19M4 11H19M4 17H19M4 22H19" stroke="#aaa" /><path d="M21 6H24M21 11H24M21 17H24M21 22H24" stroke="#666" />
        </Tool>
      </RibbonGroup>
      <RibbonGroup w={296} pad="2px 0 0 8px" label="Data Visualizations" lw={96}>
        <Tool w={43} iw={24} label="Chart" lw={27} menu>
          <path d="M0 9H7V27H0Z" fill={B} /><path d="M8 1H15V27H8Z" fill={O} /><path d="M16 6H23V27H16Z" fill={G} />
        </Tool>
        <Tool w={43} label="Gauge" lw={33}>
          <path d="M3.500 20A10.800 11.500 0 0 1 21 7.500" stroke={O} strokeWidth="7" /><path d="M20.500 10.500A10.800 11.500 0 0 1 24.600 20" stroke="#6aa58e" strokeWidth="6.500" />
          <path d="M24 11L15 20" stroke="#fff" strokeWidth="3" /><path d="M24 11L13 19" stroke="#444" strokeWidth="1.600" /><circle cx="13" cy="19" r="2.500" fill="#555" />
        </Tool>
        <Tool w={42} label="Map" lw={21.5} menu>
          <ellipse cx="14" cy="14" rx="13.200" ry="13.500" fill="#fff" stroke={B} strokeWidth="1.200" />
          <path d="M14 .5V27.500M1 14H27M3 7Q14 11 25 7M3 21Q14 17 25 21M14 .5Q3 14 14 27.500M14 .5Q25 14 14 27.500" stroke="#63a58a" />
        </Tool>
        <Tool w={41} label="Data" lw={24} second="Bar" sw={17}>
          <rect x=".6" y="1" width="26.800" height="26" fill="#fff" stroke={G} />
          <path d="M7 1H17V6H7ZM7 6H11V11H7ZM7 11H15V16H7ZM7 16H12V21H7ZM7 21H16V27H7Z" fill={B} />
          <path d="M0 6H28M0 11H28M0 16H28M0 21H28M6.500 1V27M19 1V27" stroke="#aaa" /><path d="M21 3.500H25M21 8.500H25M21 13.500H25M21 18.500H25M21 24H25" stroke="#666" />
        </Tool>
        <Tool w={60.5} iw={30} label="Sparkline" lw={49}>
          <path d="M0 5H30M0 23H30M4 0V27" stroke={G} strokeWidth="1.200" /><path d="M5 20L10 10L15 19L20 9L24 15L29 9" stroke={B} strokeWidth="1.300" />
        </Tool>
        <Tool w={54} iw={18} on label="Indicator" lw={46}>
          <rect x=".7" y=".7" width="16.600" height="27" fill="#fff" stroke={G} strokeWidth="1.300" />
          <path d="M3 3.500H15V9.500H3Z" fill="#d9603b" /><path d="M3 11.500H15V17.500H3Z" fill={O} /><path d="M3 19.500H15V25.500H3Z" fill="#6aa58e" />
        </Tool>
      </RibbonGroup>
      <RibbonGroup w={200} pad="2px 0 0 7.5px" label="Report Items" lw={66}>
        <Tool w={44} label="Text" lw={21} second="Box" sw={19}>
          <rect x=".7" y="1.500" width="26.600" height="24.500" fill="#fff" stroke={G} strokeWidth="1.300" />
          <text x="3.500" y="14" fontFamily="Liberation Serif" fontWeight="700" fontSize="13" fill={B}>A</text>
          <path d="M14 6H25M14 9H25M14 12H25M3 18H25M3 22H25" stroke="#aaa" />
        </Tool>
        <Tool w={43} iw={30} label="Image" lw={32}>
          <rect x=".7" y=".7" width="26" height="26.500" fill="#fff" stroke={G} strokeWidth="1.300" /><circle cx="20" cy="7.500" r="3.300" fill={O} />
          <path d="M2 26V21L9 13L15 18V26Z" fill="#c9d9ee" /><rect x="15" y="16" width="14" height="10" fill="#fff" stroke={B} strokeWidth="2" /><path d="M22 26V29M18 29H26" stroke={B} strokeWidth="1.500" />
        </Tool>
        <Tool w={42} label="Line" lw={21}><path d="M0 0L28 28" stroke={B} strokeWidth="1.500" /></Tool>
        <Tool w={60} label="Rectangle" lw={50}><rect x=".7" y="2" width="26.600" height="23.500" fill="#fff" stroke={B} strokeWidth="1.300" /></Tool>
      </RibbonGroup>
      <RibbonGroup w={73.2} pad="2px 0 0 10px" label="Subreports" lw={56}>
        <Tool w={60} label="Subreport" lw={50}>
          <rect x=".7" y=".7" width="22" height="27" fill="#fff" stroke={G} strokeWidth="1.300" /><path d="M3 4.500H10" stroke={B} strokeWidth="1.500" /><path d="M3 8H10M12 6H20M12 9H20" stroke="#aaa" />
          <path d="M4.500 12V22" stroke={G} /><path d="M6 15H9V23H6Z" fill={B} /><path d="M10 12H13V23H10Z" fill={O} />
          <rect x="16.500" y="15.500" width="11" height="14" fill="#fff" stroke={G} strokeWidth="1.300" /><path d="M19 25H21V27H19Z" fill={B} /><path d="M22 22H24V27H22Z" fill={O} /><path d="M18 18.500H22" stroke={B} />
        </Tool>
      </RibbonGroup>
      <RibbonGroup w={104.7} pad="2px 0 0 10.5px" label="Header & Footer" lw={84}>
        <Tool w={47} iw={26} label="Header" lw={37} menu>
          <rect x=".7" y="1" width="21.500" height="27" fill="#fff" stroke={G} strokeWidth="1.300" /><path d="M4 9H18M4 13H18M4 17.500H18M4 22H18" stroke="#aaa" /><path d="M7-2H26V4H7Z" fill={O} stroke="#f3f3f3" />
        </Tool>
        <Tool w={46} iw={26} label="Footer" lw={34} menu>
          <rect x=".7" y=".7" width="21.500" height="27" fill="#fff" stroke={G} strokeWidth="1.300" /><path d="M4 5.500H18M4 10H18M4 14.500H18M4 19H18" stroke="#aaa" /><path d="M6 23.500H26V29H6Z" fill={O} stroke="#f3f3f3" />
        </Tool>
      </RibbonGroup>
    </Ribbon>
  );
}

/* ---------- windows ---------- */

function HomeWindow() {
  return (
    <Win $w={1430} $h={503} $mt={134} $ml={32}>
      <TabBar>
        <Tab $file $w={44} $mr={9}><T color="#fff" w={16}>File</T></Tab>
        <Tab $on $w={56}><T w={27}>Home</T></Tab>
        <Tab $w={74}><T color="#fff" w={30}>Insert</T></Tab>
        <Tab $w={53}><T color="#fff" w={22}>View</T></Tab>
      </TabBar>
      <HomeRibbon />
      <Band />
      <Body>
        <ReportData width={196.5} />
        <Strip $w={2.5} />
        <DesignSurface hp={[438.6]} vp={[314]}>
          <ReportTable x={50.6} y={76.3} cols="176px 82px 159px 159px 158px" lastRow={45} />
        </DesignSurface>
      </Body>
    </Win>
  );
}

const HandleCell = styled.div`
  background: #efefef;
  border: 0 solid #8a8a8a;
  border-width: 1px 0 0 1px;
  ${(p) => p.$bottom && css`border-bottom: 1px solid #555;`}
  ${(p) => p.$right && css`border-right: 1px solid #555;`}
`;

function SelectedTable() {
  return (
    <>
      <Grid $x={29.7} $y={56} $cols="20.5px 176.5px 88px 159px 159px 158px" $rows="20px 45.5px 45.2px 45.2px">
        <HandleCell $bottom $right />
        <HandleCell $bottom /><HandleCell $bottom /><HandleCell $bottom /><HandleCell $bottom /><HandleCell $bottom />
        <HandleCell $right />
        <Cell $e={["", "d", "", "s"]} />
        <Cell $e={["", "", "", "s"]} $span={2} $pt={4}><Field w={93.5}>[Channel_Name]</Field></Cell>
        <Cell $e={["", "", "", ""]} $span={2} />
        <HandleCell $right />
        <Cell $e={["s", "d", "d", "d"]} $pt={1}><CategoryHead /></Cell>
        <Cell $e={["s", "", "d", "d"]} $right><Head w={58}>Net QTY</Head></Cell>
        <Cell $e={["s", "", "", "d"]} $right><Head w={64.5}>Net Sales</Head></Cell>
        <Cell $e={["", "", "", ""]} $span={2} />
        <HandleCell $right $bottom />
        <Cell $e={["d", "d", "", ""]}><CategoryLink /></Cell>
        <Cell $e={["d", "d", "", "d"]} />
      </Grid>
      <Overlay $x={0} $y={0} width="440" height="230" fill="none">
        <path d="M50 211.500H314" stroke="#4a6fd0" strokeWidth="1.200" />
        <path d="M226.500 84V76.700H440V80.800H230.500V84Z" fill="#eba414" />
        <path d="M50 166.500H57.500V170H54V208H57.500V211.500H50Z" fill="#eba414" />
        <path d="M230.500 67L233 64.500H440M41.500 170L38.500 173V205L41.500 208" stroke="#666" strokeWidth="1.200" />
        <path d="M228.500 85V212M225 79V212M229.500 168.500H310V212" stroke="#888" strokeDasharray="2.500 1.700" />
        <path d="M254.500 188.500H286M273.500 176L286.500 188.500L273.500 201" stroke="#dccd50" strokeWidth="3" />
        <path d="M440 166.300H314V211.500H440" stroke="#666" strokeWidth="4" />
        <path d="M319.500 170V210M403 170V210M319.500 168.800H420" stroke="#888" strokeDasharray="2.500 1.700" />
        <circle cx="359.300" cy="189" r="15" fill="#3cbe3c" />
      </Overlay>
    </>
  );
}

const GroupsBar = styled.div`
  flex: none;
  height: 25px;
  background: #212121;
  display: flex;
  align-items: center;
  padding: 5px 13px 0 3px;
`;
const Column = styled.div`
  flex: 1;
  min-width: 0;
  display: flex;
  flex-direction: column;
  border-bottom: 1px solid #8a8a8a;
`;
const Upper = styled.div`
  flex: 1;
  min-height: 0;
  display: flex;
`;
const QuickBar = styled.svg`
  fill: none;
  flex: none;
`;

function InsertWindow() {
  return (
    <Win $w={1676} $h={754} $mt={124} $ml={53}>
      <TitleBar>
        <QuickBar width="60" height="13">
          <path d="M0 0H12V12H0Z" fill="#9a64bd" /><path d="M2.500 0H9.500V5H2.500Z" fill="#fff" /><path d="M3.500 8H8.500V12H3.500Z" fill="#fff" /><path d="M5 9V12" stroke="#9a64bd" strokeWidth="1.500" />
          <path d="M27 0L23 3.500L27 7M24 3.500H31Q35 4 35 8Q34.500 12 29 12" stroke="#4583c4" strokeWidth="2" />
          <path d="M54 0L58 3.500L54 7M57 3.500H50Q46 4 46 8Q46.500 12 51 12" stroke="#7a7a7a" strokeWidth="2" />
        </QuickBar>
        <WinTitle><T size={11.8} color="#eee" w={260}>ResellerVSOnlineMain.rdl - Microsoft Report Builder</T></WinTitle>
      </TitleBar>
      <TabBar>
        <Tab $file $w={43}><T color="#fff" w={16}>File</T></Tab>
        <Tab $w={74}><T color="#fff" w={27.5}>Home</T></Tab>
        <Tab $on $w={58}><T w={29.5}>Insert</T></Tab>
        <Tab $w={66}><T color="#fff" w={22}>View</T></Tab>
      </TabBar>
      <InsertRibbon />
      <Band />
      <Body>
        <ReportData width={195} />
        <Strip $w={3} />
        <Column>
          <Upper>
            <DesignSurface hp={[319, 401]} vp={[168.3, 211.3]}>
              <SelectedTable />
            </DesignSurface>
            <Strip $w={5} />
          </Upper>
          <GroupsBar>
            <svg width="16" height="13" fill="none"><rect width="16" height="13" fill="#7d7d7d" /><path d="M1 2.500H15M1 8.500H15" stroke="#fff" strokeWidth="2.200" strokeDasharray="4 1" /><path d="M1 5.500H15M1 11H15" stroke="#b5cbe3" strokeWidth="2" strokeDasharray="4 1" /></svg>
            <Gap $w={9} /><T color="#fff" w={64}>Row Groups</T>
            <Gap $w={649} />
            <svg width="16" height="13" fill="none"><rect width="16" height="13" fill="#7d7d7d" /><path d="M3.500 1V12M12.500 1V12" stroke="#b5cbe3" strokeWidth="4" strokeDasharray="2 1" /><path d="M8 1V12" stroke="#fff" strokeWidth="4" strokeDasharray="2 1" /></svg>
            <Gap $w={9} /><T color="#fff" w={81}>Column Groups</T>
            <Gap $w={612} />
            <svg width="7" height="4"><path d="M0 0H7L3.500 4Z" fill="#ddd" /></svg>
          </GroupsBar>
        </Column>
      </Body>
    </Win>
  );
}

/* ---------- indicator dialog ---------- */

const Dialog = styled.div`
  position: absolute;
  left: 3904px;
  top: 330px;
  width: 571px;
  height: 511px;
  background: #f0f0f0;
  border: 1px solid #1883d7;
  display: flex;
  flex-direction: column;
`;
const DialogTitle = styled.div`
  height: 30px;
  flex: none;
  background: #fff;
  display: flex;
  align-items: center;
  justify-content: space-between;
  padding: 0 10px 0 8px;
`;
const DialogBody = styled.div`
  display: flex;
  gap: 6px;
  padding: 6.3px 6px 0;
`;
const TypeList = styled.div`
  width: 126.5px;
  height: 436.5px;
  background: #fff;
  border: 1px solid #828790;
  padding: 1px;
`;
const TypeItem = styled.div`
  height: 24px;
  margin-bottom: 2px;
  padding-left: 10px;
  display: flex;
  align-items: center;
  border: 1px dotted ${(p) => (p.$on ? "#000" : "transparent")};
  background: ${(p) => (p.$on ? "#e8e8e8" : "transparent")};
`;
const Gallery = styled.div`
  width: 425px;
  height: 436.5px;
  background: #fff;
  border: 1px solid #a0a0a0;
`;
const SectionHead = styled.div`
  width: ${(p) => p.$w}px;
  height: 23px;
  margin-bottom: 2px;
  padding-left: 5px;
  display: flex;
  align-items: center;
  background: #f2f2f2;
`;
const Sets = styled.div`
  display: grid;
  grid-template-columns: repeat(3, 131px);
  grid-auto-rows: 31px;
  padding-left: 1px;
`;
const SetBox = styled.div`
  width: 133px;
  display: flex;
  align-items: center;
  gap: 4.8px;
  padding-left: 5px;
  border: 1px solid ${(p) => (p.$on ? "#ecd34a" : "transparent")};
  background: ${(p) => (p.$on ? "#fff7ae" : "transparent")};
`;
const DialogFoot = styled.div`
  display: flex;
  justify-content: flex-end;
  gap: 8px;
  padding: 7.5px 7px 0;
`;
const Button = styled.div`
  width: 74.5px;
  height: 22px;
  display: flex;
  align-items: center;
  justify-content: center;
  background: #e1e1e1;
  border: ${(p) => (p.$main ? "2.5px solid #0078d7" : "1px solid #adadad")};
`;

const STAR = "M10 -1.200L12.900 6.700H21L14.400 12L16.900 20.700L10 15.600L3.100 20.700L5.600 12L-1 6.700H7.100Z";

function Glyph({ k, c = "k", n = 0 }) {
  const col = C[c];
  const straight = (a) => (
    <g transform={`rotate(${a} 10 10)`} fill="none" strokeWidth="2.500">
      <path d="M11 20V2M3.500 9L11 1.200L18.300 9" stroke="#bbb" strokeWidth="2" />
      <path d="M10 20V1.500M2.500 9L10 1.200L17.500 9" stroke={col} />
    </g>
  );
  const diagonal = (a) => (
    <path transform={`rotate(${a} 10 10)`} d="M2.500 17.500L16.500 3M5.500 2.800H16.800V14" fill="none" stroke={col} strokeWidth="2.600" />
  );
  const shapes = {
    up: () => straight(0),
    right: () => straight(90),
    down: () => straight(180),
    ne: () => diagonal(0),
    se: () => diagonal(90),
    triDown: () => <path d="M0 4.500H20L10 16Z" fill={col} />,
    dash: () => <path d="M0 7.500H20V12H0Z" fill={col} stroke="#c9b95a" strokeWidth=".6" />,
    triUp: () => <path d="M0 15.500H20L10 4Z" fill={col} />,
    tri: () => <path d="M0 18.500H20L10 2Z" fill={col} stroke="#bbb" strokeWidth=".8" />,
    cx: () => <><circle cx="10" cy="10" r="8" fill={col} /><path d="M6 6L14 14M14 6L6 14" stroke="#fff" strokeWidth="2.200" /></>,
    cbang: () => <><circle cx="10" cy="10" r="8.500" fill={col} /><path d="M10 3V12.500M10 14.500V16.500" stroke="#fff" strokeWidth="2" /></>,
    ccheck: () => <><circle cx="10" cy="10" r="8" fill={col} /><path d="M5.500 10L9 14L14.500 6" fill="none" stroke="#fff" strokeWidth="2" /></>,
    x: () => <path d="M2 3L17.500 18M17.500 3L2 18" stroke={col} strokeWidth="2.600" />,
    bang: () => <path d="M10 2V13M10 15V17.500" stroke={col} strokeWidth="2.600" />,
    check: () => <path d="M1.500 10L7.500 17L18 2.500" fill="none" stroke={col} strokeWidth="2.600" />,
    flag: () => <><path d="M4.500 1V20.500" stroke={col} strokeWidth="1.800" /><path d="M4 1.500L19 6.500L4 11Z" fill={col} /></>,
    dot: () => <circle cx="10" cy="10" r="9.400" fill={n || col} stroke="#999" strokeWidth=".5" />,
    light: () => <><path d="M0 0H20V20H0Z" fill="#000" /><circle cx="10" cy="10.300" r="6" fill={col} /></>,
    diamond: () => <path d="M10 0L20 10L10 20L0 10Z" fill={col} />,
    star: () => (
      <>
        <clipPath id={`part${n * 10}`}><rect x="-2" y="-2" width={2 + 20 * n + (n === 1 ? 2 : 0)} height="24" /></clipPath>
        <path d={STAR} fill="#ccc" stroke="#cfc05a" strokeWidth=".9" />
        <path d={STAR} fill="#d9ca3c" clipPath={`url(#part${n * 10})`} />
      </>
    ),
    bars: () => [0, 1, 2, 3].map((i) => (
      <rect key={i} x={1 + i * 4.7} y={[13, 9, 5, 0][i]} width="3.800" height={[7, 11, 15, 20][i]} fill={i < n ? "#000" : "#bcbcbc"} />
    )),
    pie: () => (
      <>
        <circle cx="10" cy="10" r="8.600" fill={n === 4 ? "#000" : "#fff"} stroke="#000" />
        {n > 0 && n < 4 && <path d={["", "M10 10V1.500A8.500 8.500 0 0 1 18.500 10Z", "M10 1.500A8.500 8.500 0 0 1 10 18.500Z", "M10 10V1.500A8.500 8.500 0 1 1 1.500 10Z"][n]} fill="#000" />}
      </>
    ),
    quad: () => [[0, 10.5], [10.5, 10.5], [0, 0], [10.5, 0]].map(([x, y], i) => (
      <rect key={i} x={x} y={y} width="9.500" height="9.500" rx=".8" fill={i < n ? "#000" : "#bcbcbc"} />
    )),
  };
  return <svg width="20" height="20" overflow="visible">{shapes[k]()}</svg>;
}

const s = (text) => text.split(" ").map((t) => { const [k, c] = t.split("."); return { k, c }; });
const nums = (k, list) => list.map((n) => ({ k, n }));
const dots = (list) => list.map((n) => ({ k: "dot", n }));
const SECTIONS = [
  { name: "Directional", hw: 67, w: 56, sets: [
    s("down.r right.y up.g"), s("down.n right.n up.n"), s("triDown.r dash.y triUp.g"),
    s("down.n se.n ne.n up.n"), s("down.r se.y ne.y up.g"), s("down.n se.n right.n ne.n up.n"),
    s("down.r se.y right.y ne.y up.g")] },
  { name: "Symbols", hw: 53, w: 41.5, sets: [s("cx.r cbang.y ccheck.g"), s("x.r bang.y check.g"), s("flag.r flag.y flag.g")] },
  { name: "Shapes", hw: 48, w: 36.5, sets: [
    dots(["#d06a62", "#eadd66", "#9dd188"]), s("light.r light.y light.g"), s("diamond.r tri.y dot.g"),
    dots(["#000", "#d06a62", "#eadd66", "#9dd188"]), dots(["#000", "#d2d2d0", "#fcd5dc", "#d06a62"])] },
  { name: "Ratings", hw: 50, w: 38.5, sets: [
    nums("star", [0, 0.5, 1]), nums("star", [0, 0.4, 0.5, 0.7, 1]), nums("bars", [1, 2, 3, 4]),
    nums("bars", [0, 1, 2, 3, 4]), nums("pie", [0, 1, 2, 3, 4]), nums("quad", [0, 1, 2, 3, 4])] },
];

function IndicatorDialog() {
  return (
    <Dialog>
      <DialogTitle>
        <T size={12} color="#111" w={109}>Select Indicator Type</T>
        <svg width="10" height="10"><path d="M0 0L10 10M10 0L0 10" stroke="#111" strokeWidth="1.200" /></svg>
      </DialogTitle>
      <DialogBody>
        <TypeList>
          {[["Directional", 54], ["Symbols", 42], ["Shapes", 35.6], ["Ratings", 37]].map(([t, w], i) => (
            <TypeItem key={t} $on={i === 0}><T w={w}>{t}</T></TypeItem>
          ))}
        </TypeList>
        <Gallery>
          {SECTIONS.map((sec, si) => (
            <React.Fragment key={sec.name}>
              <SectionHead $w={sec.hw}><T w={sec.w}>{sec.name}</T></SectionHead>
              <Sets>
                {sec.sets.map((set, i) => (
                  <SetBox key={i} $on={si === 0 && i === 0}>
                    {set.map((g, j) => <Glyph key={j} {...g} />)}
                  </SetBox>
                ))}
              </Sets>
            </React.Fragment>
          ))}
        </Gallery>
      </DialogBody>
      <DialogFoot>
        <Button $main><T color="#111" w={15}>OK</T></Button>
        <Button><T color="#111" w={34}>Cancel</T></Button>
      </DialogFoot>
      <Overlay $x={559} $y={499} width="9" height="9">
        <path d="M6 0h2v2h-2zM3 3h2v2h-2zM6 3h2v2h-2zM0 6h2v2h-2zM3 6h2v2h-2zM6 6h2v2h-2z" fill="#bbb" />
      </Overlay>
    </Dialog>
  );
}

/* ---------- app ---------- */

export default function App() {
  return (
    <>
      <Global />
      <Stage id="stage">
        <GaugeShot />
        <StepArrow $mt={456} $ml={31} width="142" height="84">
          <path d="M2.500 21.500H70.500V3L139.500 41.500L70.500 80V60.500H2.500Z" />
        </StepArrow>
        <HomeWindow />
        <StepArrow $mt={394} $ml={20} width="179" height="96">
          <path d="M2.500 25.500H90.500V4L176.500 47.300L90.500 91V69.500H2.500Z" />
        </StepArrow>
        <InsertWindow />

        <Note x={279} b={236.5} w={870} color="#000">Now please click the indicator Icon of the red-marked area by using the mouse's right Button!</Note>
        <GaugeFloats />
        <Note x={173} b={560} w={845} color={RED}>Swicth the setting (Unspecified) To Net_QTY in "Gauge Data" pane in the red-marked area !</Note>

        <Note x={1556} b={119} w={503} color={RED}>1.please click the Tab "Insert" in the red-marked area !</Note>
        <Marker $x={1674} $y={128} $w={69} $h={34} />
        <Note x={1680} b={316} w={1100} color={RED}>On the ribbon, click the Rectangle icon, and then click inside the [Sum(Net_Sales)] cell in the [Product_Category_Name]</Note>

        <Marker $x={3657} $y={161} $w={77} $h={96} />
        <Note x={3575} b={328} w={700} color="#000">1.On the ribbon, click the Indicator icon, and then click inside the rectangle!</Note>
        <IndicatorDialog />
        <Marker $x={4039} $y={390} $w={106} $h={35} />
        <Marker $x={4300} $y={806} $w={93} $h={37} />
        <Note x={3906} b={759} w={393} color={RED}>2.Click the 3 Signs type, and then click OK!</Note>
      </Stage>
    </>
  );
}
